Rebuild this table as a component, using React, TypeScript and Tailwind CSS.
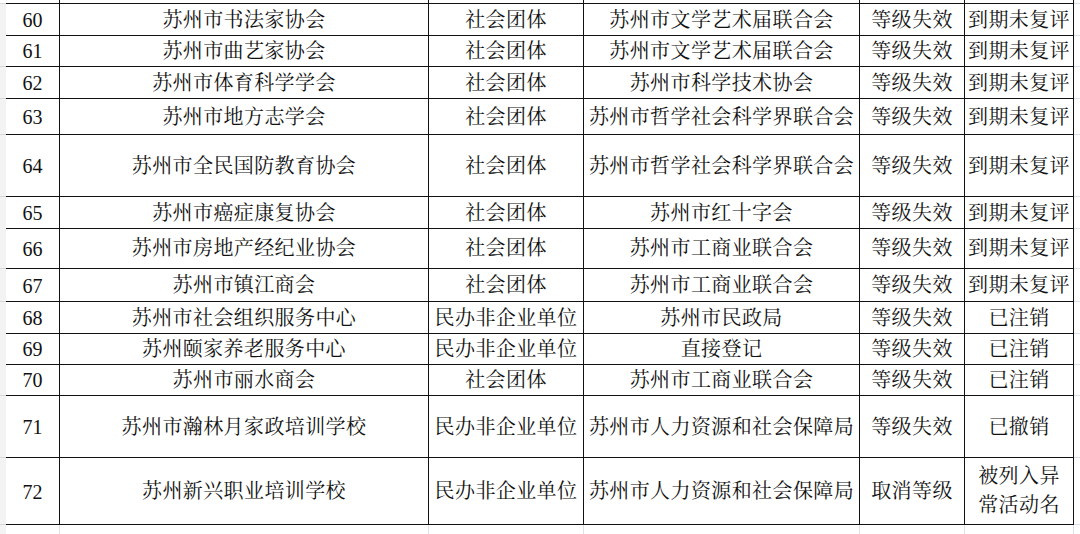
import React from 'react';

type Row = {
  no: string;
  name: string;
  kind: string;
  dept: string;
  level: string;
  status: React.ReactNode;
  h: string;
};

const rows: Row[] = [
  { no: '60', name: '苏州市书法家协会', kind: '社会团体', dept: '苏州市文学艺术届联合会', level: '等级失效', status: '到期未复评', h: 'h-[31px]' },
  { no: '61', name: '苏州市曲艺家协会', kind: '社会团体', dept: '苏州市文学艺术届联合会', level: '等级失效', status: '到期未复评', h: 'h-[32px]' },
  { no: '62', name: '苏州市体育科学学会', kind: '社会团体', dept: '苏州市科学技术协会', level: '等级失效', status: '到期未复评', h: 'h-[32px]' },
  { no: '63', name: '苏州市地方志学会', kind: '社会团体', dept: '苏州市哲学社会科学界联合会', level: '等级失效', status: '到期未复评', h: 'h-[36px]' },
  { no: '64', name: '苏州市全民国防教育协会', kind: '社会团体', dept: '苏州市哲学社会科学界联合会', level: '等级失效', status: '到期未复评', h: 'h-[62px]' },
  { no: '65', name: '苏州市癌症康复协会', kind: '社会团体', dept: '苏州市红十字会', level: '等级失效', status: '到期未复评', h: 'h-[31px]' },
  { no: '66', name: '苏州市房地产经纪业协会', kind: '社会团体', dept: '苏州市工商业联合会', level: '等级失效', status: '到期未复评', h: 'h-[41px]' },
  { no: '67', name: '苏州市镇江商会', kind: '社会团体', dept: '苏州市工商业联合会', level: '等级失效', status: '到期未复评', h: 'h-[33px]' },
  { no: '68', name: '苏州市社会组织服务中心', kind: '民办非企业单位', dept: '苏州市民政局', level: '等级失效', status: '已注销', h: 'h-[31px]' },
  { no: '69', name: '苏州颐家养老服务中心', kind: '民办非企业单位', dept: '直接登记', level: '等级失效', status: '已注销', h: 'h-[31px]' },
  { no: '70', name: '苏州市丽水商会', kind: '社会团体', dept: '苏州市工商业联合会', level: '等级失效', status: '已注销', h: 'h-[32px]' },
  { no: '71', name: '苏州市瀚林月家政培训学校', kind: '民办非企业单位', dept: '苏州市人力资源和社会保障局', level: '等级失效', status: '已撤销', h: 'h-[62px]' },
  {
    no: '72',
    name: '苏州新兴职业培训学校',
    kind: '民办非企业单位',
    dept: '苏州市人力资源和社会保障局',
    level: '取消等级',
    status: (
      <span className="leading-[29px]">
        被列入异
        <br />
        常活动名
      </span>
    ),
    h: 'h-[67px]',
  },
];

const grid = 'grid grid-cols-[6px_54px_369px_155px_276px_105px_109px_1fr]';
const cell = 'flex items-center justify-center whitespace-nowrap border-r border-b border-[#111] text-center';

export default function App() {
  return (
    <div className="w-[1080px] h-[534px] overflow-hidden bg-white text-[20px] tracking-[0.4px] text-[#111] font-['Liberation_Serif','Noto_Serif_CJK_SC','Noto_Sans_CJK_SC',serif]">
      {/* cut-off row above */}
      <div className={`${grid} h-[4px]`}>
        <div className="border-b border-[#d8d8d8]" />
        <div className="border-r border-b border-[#111]" />
        <div className="border-r border-b border-[#111]" />
        <div className="border-r border-b border-[#111]" />
        <div className="border-r border-b border-[#111]" />
        <div className="border-r border-b border-[#111]" />
        <div className="border-r border-b border-[#111]" />
        <div className="border-b border-[#dbe1ea]" />
      </div>

      {rows.map((r) => (
        <div key={r.no} className={`${grid} ${r.h}`}>
          <div className="border-b border-[#d8d8d8] bg-[#f3f3f3]" />
          <div className={`${cell} pt-[1px] font-['Liberation_Serif',serif] tracking-normal`}>{r.no}</div>
          <div className={cell}>{r.name}</div>
          <div className={cell}>{r.kind}</div>
          <div className={cell}>{r.dept}</div>
          <div className={cell}>{r.level}</div>
          <div className={cell}>{r.status}</div>
          <div className="border-b border-[#dbe1ea]" />
        </div>
      ))}

      {/* empty spreadsheet area below */}
      <div className={`${grid} h-[10px]`}>
        <div className="bg-[#f3f3f3]" />
        <div className="border-r border-[#dbe1ea]" />
        <div className="border-r border-[#dbe1ea]" />
        <div className="border-r border-[#dbe1ea]" />
        <div className="border-r border-[#dbe1ea]" />
        <div className="border-r border-[#dbe1ea]" />
        <div className="border-r border-[#dbe1ea]" />
        <div />
      </div>
    </div>
  );
}
